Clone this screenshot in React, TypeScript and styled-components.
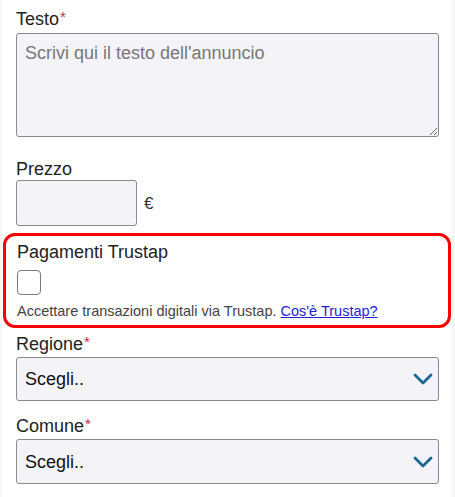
import React from "react";
import styled, { createGlobalStyle } from "styled-components";

const Global = createGlobalStyle`
  html, body { margin: 0; padding: 0; background: #f6f6f6; }
  body { font-family: "Liberation Sans", Arial, sans-serif; }
  * { box-sizing: border-box; }
`;

const Page = styled.div`
  margin: 0 3px 0 2px;
  background: #ffffff;
  padding: 9px 13px 20px 14px;
  min-height: 497px;
`;

const Field = styled.div<{ $mt?: number }>`
  display: flex;
  flex-direction: column;
  margin-top: ${(p) => p.$mt ?? 0}px;
`;

const Label = styled.label<{ $mb?: number }>`
  font-size: 18px;
  line-height: 20px;
  color: #222222;
  margin-bottom: ${(p) => p.$mb ?? 4}px;
`;

const Star = styled.span`
  color: #c8263f;
  font-size: 15px;
  vertical-align: top;
  line-height: 16px;
  margin-left: 1px;
`;

const TextArea = styled.textarea`
  width: 423px;
  height: 104px;
  background: #f4f4f8;
  border: 1px solid #8a8a8a;
  border-radius: 3px;
  padding: 9px 8px;
  font-family: "Liberation Sans", Arial, sans-serif;
  font-size: 18px;
  line-height: 21px;
  color: #222;
  outline: none;
  &::placeholder { color: #777777; }
`;

const PriceRow = styled.div`
  display: flex;
  align-items: center;
  gap: 7px;
`;

const PriceInput = styled.input`
  width: 121px;
  height: 46px;
  background: #f4f4f8;
  border: 1px solid #8a8a8a;
  border-radius: 3px;
  outline: none;
`;

const Euro = styled.span`
  font-size: 17px;
  color: #333;
  padding-top: 2px;
`;

const TrustBox = styled.div`
  margin: 7px -12px 0 -13px;
  border: 3px solid #ff0000;
  border-radius: 12px;
  padding: 6px 10px 5px 11px;
  display: flex;
  flex-direction: column;
`;

const Check = styled.input.attrs({ type: "checkbox" })`
  appearance: none;
  -webkit-appearance: none;
  width: 24px;
  height: 25px;
  margin: 8px 0 0 0;
  border: 1px solid #7a7a7a;
  border-radius: 4px;
  background: #fff;
`;

const Hint = styled.p`
  margin: 8px 0 0 0;
  font-size: 14.5px;
  line-height: 17px;
  color: #444444;
`;

const Link = styled.a`
  color: #2222d8;
  text-decoration: underline;
`;

const SelectWrap = styled.div`
  position: relative;
  width: 423px;
`;

const Select = styled.select<{ $h: number }>`
  appearance: none;
  -webkit-appearance: none;
  width: 423px;
  height: ${(p) => p.$h}px;
  background: #f4f4f8;
  border: 1px solid #8a8a8a;
  border-radius: 3px;
  padding: 0 8px;
  font-family: "Liberation Sans", Arial, sans-serif;
  font-size: 18px;
  color: #111;
  outline: none;
`;

const Chevron = styled.svg`
  position: absolute;
  right: 6px;
  top: 50%;
  transform: translateY(-50%);
  pointer-events: none;
`;

const Arrow = () => (
  <Chevron width="20" height="12" viewBox="0 0 20 12">
    <path d="M2 2 L10 10 L18 2" fill="none" stroke="#1b6892" strokeWidth="2.8" strokeLinecap="round" strokeLinejoin="round" />
  </Chevron>
);

export default function App() {
  return (
    <>
      <Global />
      <Page>
        <Field>
          <Label $mb={4}>
            Testo<Star>*</Star>
          </Label>
          <TextArea placeholder="Scrivi qui il testo dell'annuncio" />
        </Field>
        <Field $mt={22}>
          <Label $mb={1}>Prezzo</Label>
          <PriceRow>
            <PriceInput />
            <Euro>€</Euro>
          </PriceRow>
        </Field>
        <TrustBox>
          <Label $mb={0}>Pagamenti Trustap</Label>
          <Check />
          <Hint>
            Accettare transazioni digitali via Trustap. <Link href="#">Cos'è Trustap?</Link>
          </Hint>
        </TrustBox>
        <Field $mt={6}>
          <Label $mb={3}>
            Regione<Star>*</Star>
          </Label>
          <SelectWrap>
            <Select $h={44}>
              <option>Scegli..</option>
            </Select>
            <Arrow />
          </SelectWrap>
        </Field>
        <Field $mt={15}>
          <Label $mb={3}>
            Comune<Star>*</Star>
          </Label>
          <SelectWrap>
            <Select $h={45}>
              <option>Scegli..</option>
            </Select>
            <Arrow />
          </SelectWrap>
        </Field>
      </Page>
    </>
  );
}
